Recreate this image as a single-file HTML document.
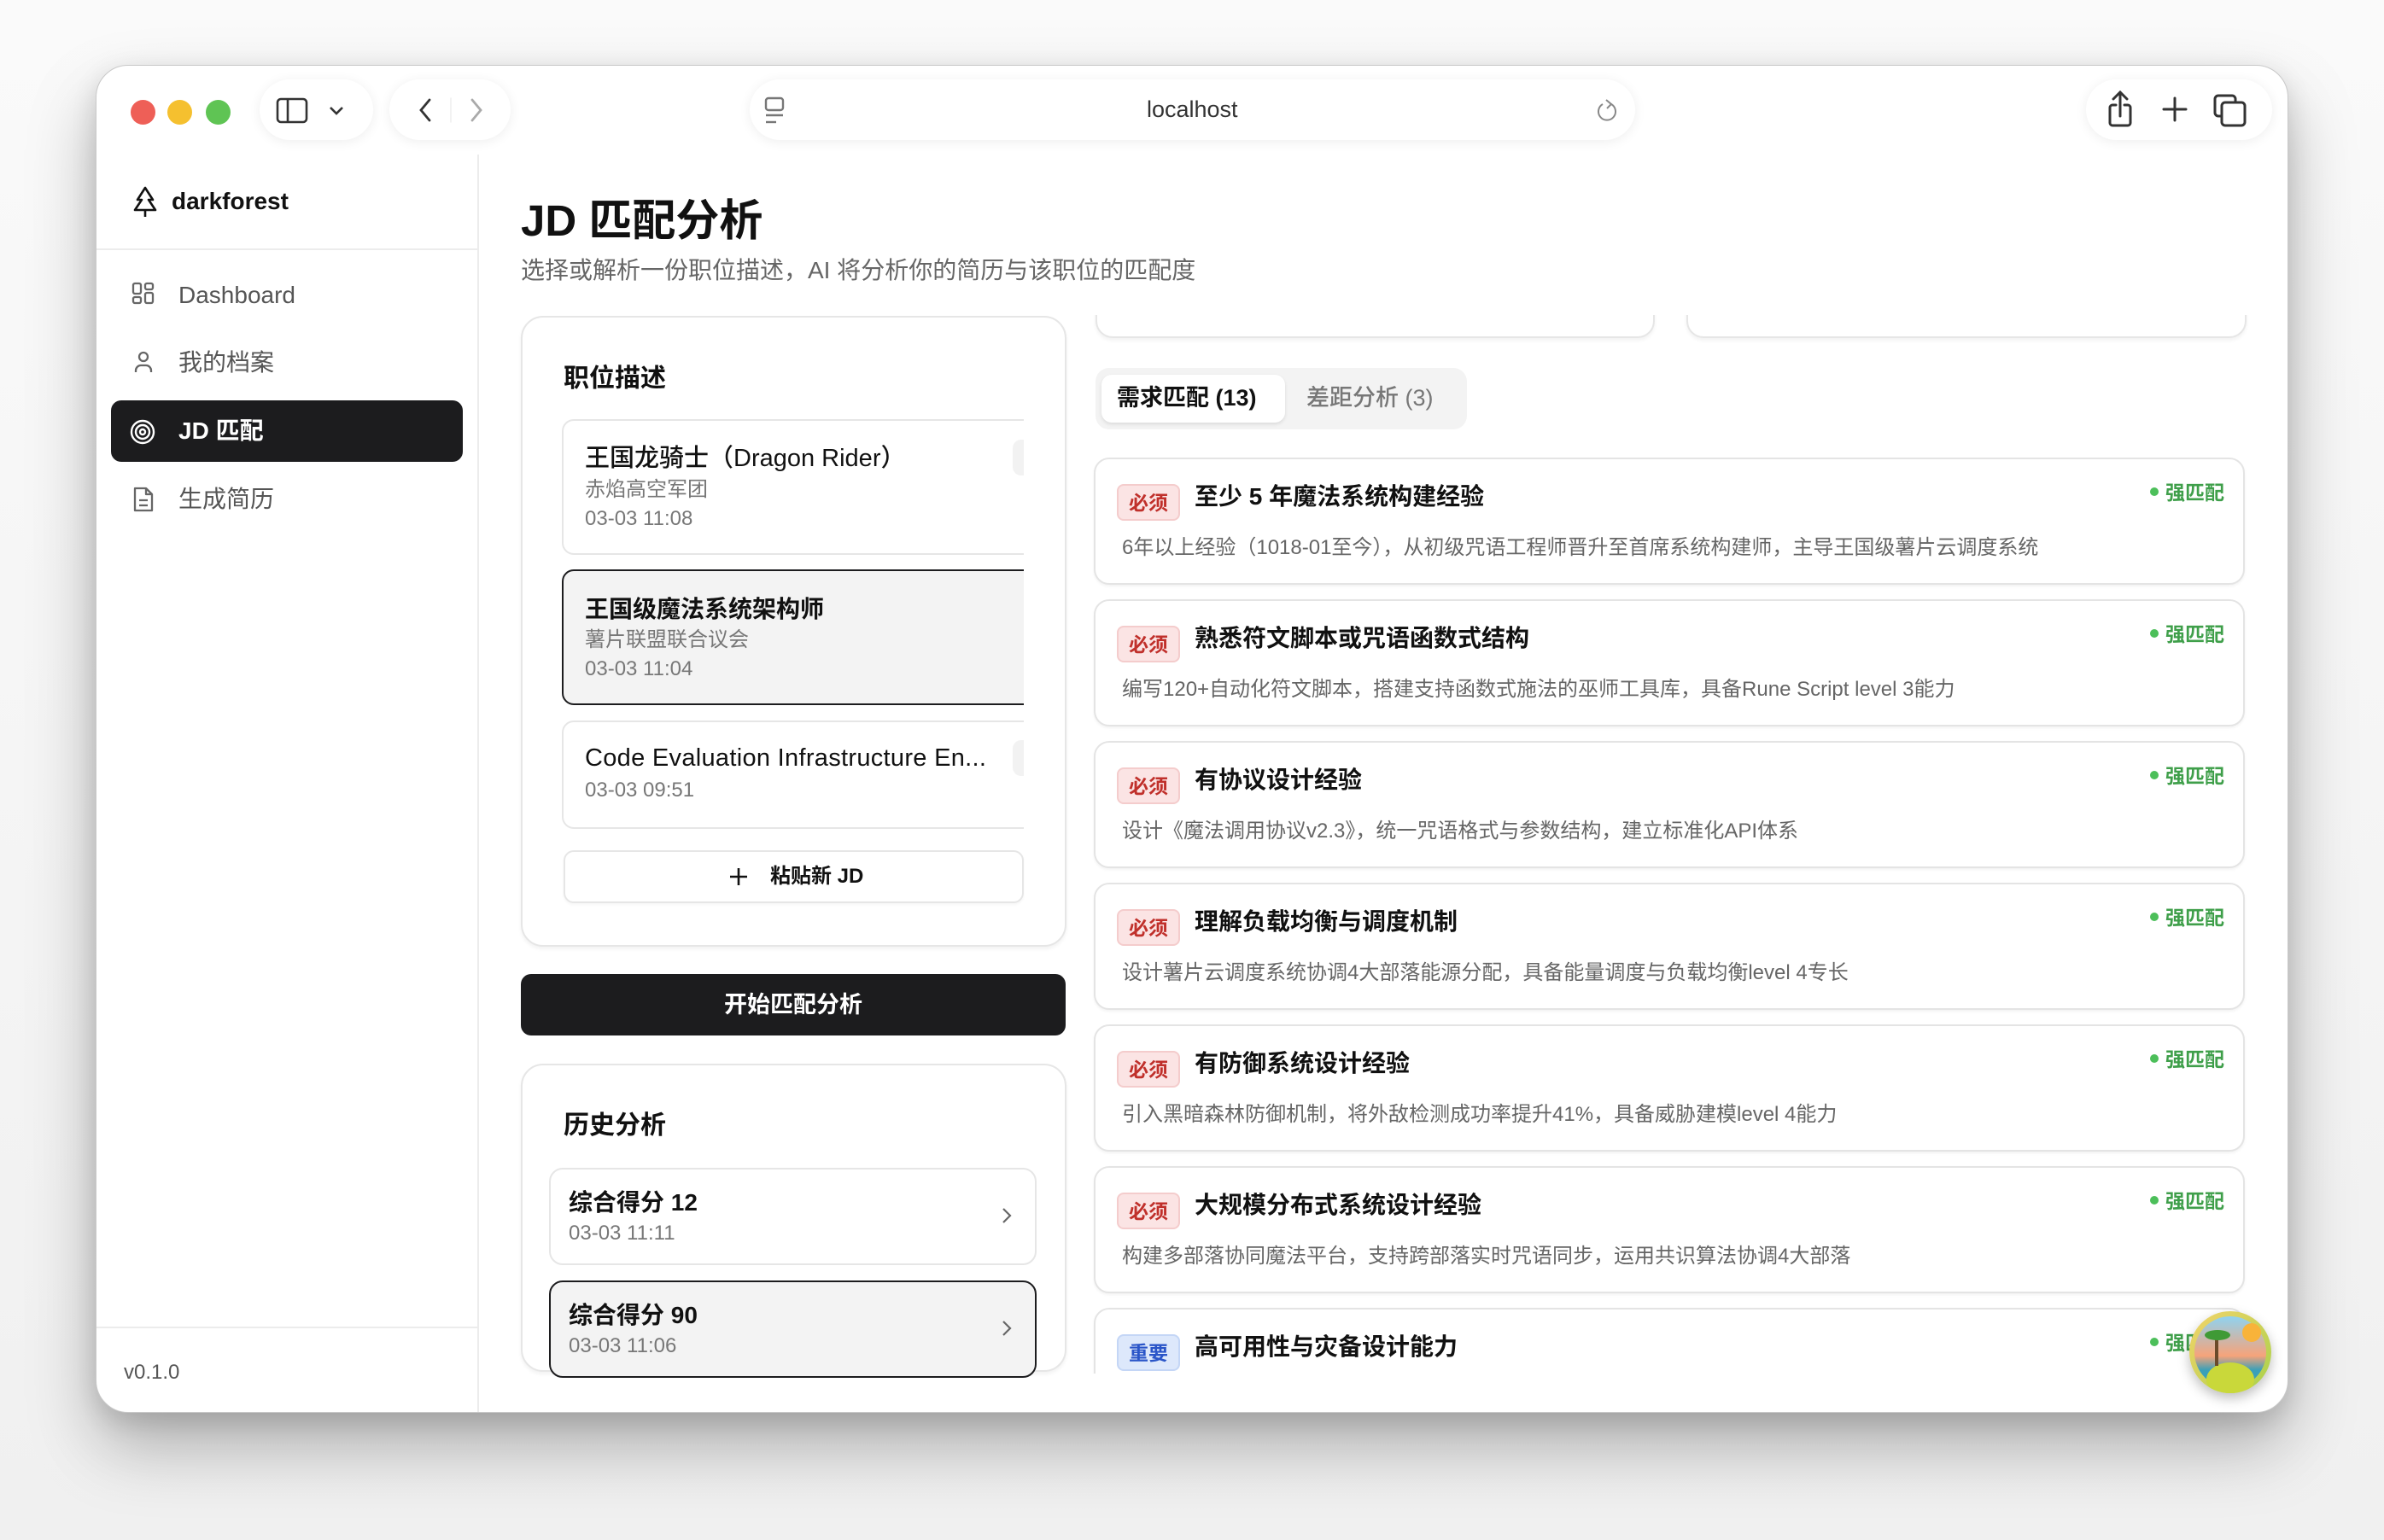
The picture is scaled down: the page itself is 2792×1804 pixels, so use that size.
<!DOCTYPE html>
<html><head><meta charset="utf-8"><style>
*{box-sizing:border-box;margin:0;padding:0}
body{width:2792px;height:1804px;overflow:hidden;background:linear-gradient(#fafafa,#f0f0f0);font-family:"Liberation Sans","Noto Sans CJK SC",sans-serif;position:relative}
.a{position:absolute}
.t{position:absolute;white-space:nowrap;line-height:1}
.win{left:112px;top:76px;width:2568px;height:1579px;background:#fff;border-radius:38px;border:1px solid #c9c9c9;box-shadow:0 40px 80px rgba(0,0,0,.28),0 10px 30px rgba(0,0,0,.12);overflow:hidden}
.pill{background:#fff;border-radius:36px;box-shadow:0 2px 14px rgba(0,0,0,.07)}
.card{background:#fff;border:2px solid #e6e6e6;border-radius:26px;box-shadow:0 3px 4px rgba(0,0,0,.05)}
.req{left:2px;width:1348px;height:149px;background:#fff;border:2px solid #e4e4e4;border-radius:18px;box-shadow:0 2px 3px rgba(0,0,0,.05)}
.bd{left:25px;top:29px;width:74px;height:43px;border-radius:8px;font-size:23px;line-height:41px;text-align:center;font-weight:700}
.must{background:#fbe4e4;border:2px solid #f4cccc;color:#c0302b}
.imp{background:#dde8fb;border:2px solid #c4d6f6;color:#2a55c8}
.rt{left:116px;top:30px;font-size:28px;font-weight:700;color:#111}
.rd{left:31px;top:92px;font-size:24px;color:#666}
.sm{right:22px;top:28px;font-size:23px;font-weight:700;color:#3f9f4a}
.sm:before{content:"";display:inline-block;width:10px;height:10px;border-radius:5px;background:#4cbf5a;margin-right:8px;vertical-align:4px}
</style></head><body>
<div class="a win">
 <div class="a" style="left:40px;top:40px;width:29px;height:29px;border-radius:50%;background:#ee5f57"></div>
 <div class="a" style="left:83px;top:40px;width:29px;height:29px;border-radius:50%;background:#f5c02f"></div>
 <div class="a" style="left:128px;top:40px;width:29px;height:29px;border-radius:50%;background:#5fc454"></div>
 <div class="a pill" style="left:191px;top:16px;width:133px;height:71px"></div>
 <svg class="a" style="left:210px;top:34px" width="90" height="36" viewBox="0 0 90 36" fill="none" stroke="#333" stroke-width="2.6"><rect x="2" y="5" width="34" height="27" rx="4"/><line x1="14" y1="5" x2="14" y2="32"/><path d="M64 15l7 7 7-7"/></svg>
 <div class="a pill" style="left:343px;top:16px;width:142px;height:71px"></div>
 <svg class="a" style="left:360px;top:30px" width="110" height="44" viewBox="0 0 110 44" fill="none" stroke-width="2.8" stroke-linecap="round"><path d="M30 10L20 22l10 12" stroke="#333"/><line x1="55" y1="8" x2="55" y2="36" stroke="#eee" stroke-width="1.5"/><path d="M80 10l10 12-10 12" stroke="#aaa"/></svg>
 <div class="a pill" style="left:765px;top:16px;width:1037px;height:71px"></div>
 <svg class="a" style="left:780px;top:36px" width="30" height="34" viewBox="0 0 30 34" fill="none" stroke="#777" stroke-width="2.4"><rect x="4" y="2" width="20" height="14" rx="3"/><line x1="4" y1="22" x2="24" y2="22"/><line x1="4" y1="30" x2="16" y2="30"/></svg>
 <div class="t" style="left:1230px;top:38px;font-size:27px;color:#333">localhost</div>
 <svg class="a" style="left:1754px;top:36px" width="30" height="34" viewBox="0 0 30 34" fill="none" stroke="#888" stroke-width="2"><path d="M20 9a10 10 0 1 1-10 0"/><path d="M14 4l6 5-5 5"/></svg>
 <div class="a pill" style="left:2330px;top:16px;width:218px;height:71px"></div>
 <svg class="a" style="left:2350px;top:26px" width="190" height="50" viewBox="0 0 190 50" fill="none" stroke="#333" stroke-width="3" stroke-linecap="round"><path d="M15 20h-4a3 3 0 0 0-3 3v18a3 3 0 0 0 3 3h18a3 3 0 0 0 3-3V23a3 3 0 0 0-3-3h-4"/><path d="M20 33V5M12 13l8-8 8 8"/><path d="M84 12v26M71 25h26"/><rect x="131" y="9" width="24" height="24" rx="4"/><rect x="139" y="17" width="27" height="27" rx="4" fill="#fff"/></svg>

 <div class="a" style="left:446px;top:104px;width:2px;height:1475px;background:#ececec"></div>
 <div class="a" style="left:0;top:214px;width:447px;height:2px;background:#ececec"></div>
 <div class="a" style="left:0;top:1477px;width:447px;height:2px;background:#ececec"></div>
 <svg class="a" style="left:40px;top:140px" width="34" height="40" viewBox="0 0 34 40" fill="none" stroke="#111" stroke-width="2.6" stroke-linejoin="round"><path d="M17 3L8 17h5L5 29h24l-8-12h5z"/><line x1="17" y1="29" x2="17" y2="37"/></svg>
 <div class="t" style="left:88px;top:145px;font-size:28px;font-weight:700;color:#111">darkforest</div>
 <svg class="a" style="left:40px;top:252px" width="30" height="30" viewBox="0 0 30 30" fill="none" stroke="#666" stroke-width="2.3"><rect x="3" y="3" width="9" height="12" rx="2"/><rect x="17" y="3" width="9" height="7" rx="2"/><rect x="17" y="14" width="9" height="12" rx="2"/><rect x="3" y="19" width="9" height="7" rx="2"/></svg>
 <div class="t" style="left:96px;top:255px;font-size:28px;color:#555">Dashboard</div>
 <svg class="a" style="left:40px;top:332px" width="30" height="30" viewBox="0 0 30 30" fill="none" stroke="#666" stroke-width="2.3"><circle cx="15" cy="9" r="5"/><path d="M6 27v-2a6 6 0 0 1 6-6h6a6 6 0 0 1 6 6v2"/></svg>
 <div class="t" style="left:96px;top:334px;font-size:28px;color:#555">我的档案</div>
 <div class="a" style="left:17px;top:392px;width:412px;height:72px;background:#1c1c1e;border-radius:12px"></div>
 <svg class="a" style="left:38px;top:413px" width="32" height="32" viewBox="0 0 32 32" fill="none" stroke="#fff" stroke-width="2.4"><circle cx="16" cy="16" r="13"/><circle cx="16" cy="16" r="8"/><circle cx="16" cy="16" r="3"/></svg>
 <div class="t" style="left:96px;top:414px;font-size:28px;font-weight:700;color:#fff">JD 匹配</div>
 <svg class="a" style="left:40px;top:492px" width="30" height="32" viewBox="0 0 30 32" fill="none" stroke="#666" stroke-width="2.3" stroke-linejoin="round"><path d="M5 3h13l7 7v19H5z"/><path d="M18 3v7h7M10 17h10M10 23h10"/></svg>
 <div class="t" style="left:96px;top:494px;font-size:28px;color:#555">生成简历</div>
 <div class="t" style="left:32px;top:1519px;font-size:24px;color:#555">v0.1.0</div>

 <div class="t" style="left:497px;top:156px;font-size:51px;font-weight:700;color:#111">JD 匹配分析</div>
 <div class="t" style="left:497px;top:226px;font-size:28px;color:#666">选择或解析一份职位描述，AI 将分析你的简历与该职位的匹配度</div>

 <div class="a card" style="left:497px;top:293px;width:639px;height:739px"></div>
 <div class="t" style="left:547px;top:352px;font-size:30px;font-weight:700;color:#111">职位描述</div>
 <div class="a" style="left:545px;top:414px;width:541px;height:480px;overflow:hidden">
  <div class="a" style="left:0;top:0;width:600px;height:159px;border:2px solid #e6e6e6;border-radius:14px;background:#fff"></div>
  <div class="a" style="left:528px;top:24px;width:40px;height:42px;border-radius:10px;background:#f2f2f2"></div>
  <div class="t" style="left:27px;top:32px;font-size:29px;font-weight:500;color:#111">王国龙骑士（Dragon Rider）</div>
  <div class="t" style="left:27px;top:71px;font-size:24px;color:#777">赤焰高空军团</div>
  <div class="t" style="left:27px;top:105px;font-size:24px;color:#777">03-03 11:08</div>
  <div class="a" style="left:0;top:176px;width:600px;height:159px;border:2.5px solid #1c1c1e;border-radius:14px;background:#f3f3f3"></div>
  <div class="t" style="left:27px;top:209px;font-size:28px;font-weight:700;color:#111">王国级魔法系统架构师</div>
  <div class="t" style="left:27px;top:247px;font-size:24px;color:#777">薯片联盟联合议会</div>
  <div class="t" style="left:27px;top:281px;font-size:24px;color:#777">03-03 11:04</div>
  <div class="a" style="left:0;top:353px;width:600px;height:127px;border:2px solid #e6e6e6;border-radius:14px;background:#fff"></div>
  <div class="a" style="left:528px;top:376px;width:40px;height:42px;border-radius:10px;background:#f2f2f2"></div>
  <div class="t" style="left:27px;top:383px;font-size:29px;font-weight:500;color:#111;letter-spacing:0.3px">Code Evaluation Infrastructure En...</div>
  <div class="t" style="left:27px;top:423px;font-size:24px;color:#777">03-03 09:51</div>
 </div>
 <div class="a" style="left:547px;top:919px;width:539px;height:62px;border:2px solid #e6e6e6;border-radius:12px;background:#fff;box-shadow:0 2px 3px rgba(0,0,0,.04)"></div>
 <svg class="a" style="left:740px;top:938px" width="24" height="24" viewBox="0 0 24 24" stroke="#111" stroke-width="2.6"><path d="M12 2v20M2 12h20"/></svg>
 <div class="t" style="left:789px;top:938px;font-size:24px;font-weight:700;color:#111">粘贴新 JD</div>

 <div class="a" style="left:497px;top:1064px;width:638px;height:72px;background:#1c1c1e;border-radius:12px"></div>
 <div class="t" style="left:497px;top:1087px;width:638px;text-align:center;font-size:27px;font-weight:700;color:#fff">开始匹配分析</div>

 <div class="a card" style="left:497px;top:1169px;width:639px;height:361px"></div>
 <div class="t" style="left:547px;top:1227px;font-size:30px;font-weight:700;color:#111">历史分析</div>
 <div class="a" style="left:530px;top:1291px;width:571px;height:114px;border:2px solid #e6e6e6;border-radius:16px;background:#fff"></div>
 <div class="t" style="left:553px;top:1318px;font-size:28px;font-weight:700;color:#111">综合得分 12</div>
 <div class="t" style="left:553px;top:1356px;font-size:24px;color:#777">03-03 11:11</div>
 <svg class="a" style="left:1059px;top:1336px" width="14" height="22" viewBox="0 0 14 22" fill="none" stroke="#666" stroke-width="2.2"><path d="M3 3l8 8-8 8"/></svg>
 <div class="a" style="left:530px;top:1423px;width:571px;height:114px;border:2.5px solid #1c1c1e;border-radius:16px;background:#f3f3f3"></div>
 <div class="t" style="left:553px;top:1450px;font-size:28px;font-weight:700;color:#111">综合得分 90</div>
 <div class="t" style="left:553px;top:1488px;font-size:24px;color:#777">03-03 11:06</div>
 <svg class="a" style="left:1059px;top:1468px" width="14" height="22" viewBox="0 0 14 22" fill="none" stroke="#666" stroke-width="2.2"><path d="M3 3l8 8-8 8"/></svg>

 <div class="a" style="left:1166px;top:292px;width:1366px;height:1240px;overflow:hidden">
  <div class="a card" style="left:4px;top:-100px;width:655px;height:127px;border-radius:20px"></div>
  <div class="a card" style="left:696px;top:-100px;width:656px;height:127px;border-radius:20px"></div>
  <div class="a" style="left:4px;top:62px;width:435px;height:72px;background:#f3f3f3;border-radius:16px"></div>
  <div class="a" style="left:11px;top:70px;width:215px;height:56px;background:#fff;border-radius:12px;box-shadow:0 2px 4px rgba(0,0,0,.1)"></div>
  <div class="t" style="left:29px;top:84px;font-size:27px;font-weight:700;color:#111">需求匹配 (13)</div>
  <div class="t" style="left:251px;top:84px;font-size:27px;font-weight:500;color:#777">差距分析 (3)</div>

  <div class="a req" style="top:167px"><div class="t bd must">必须</div><div class="t rt">至少 5 年魔法系统构建经验</div><div class="t sm">强匹配</div><div class="t rd">6年以上经验（1018-01至今），从初级咒语工程师晋升至首席系统构建师，主导王国级薯片云调度系统</div></div>
  <div class="a req" style="top:333px"><div class="t bd must">必须</div><div class="t rt">熟悉符文脚本或咒语函数式结构</div><div class="t sm">强匹配</div><div class="t rd">编写120+自动化符文脚本，搭建支持函数式施法的巫师工具库，具备Rune Script level 3能力</div></div>
  <div class="a req" style="top:499px"><div class="t bd must">必须</div><div class="t rt">有协议设计经验</div><div class="t sm">强匹配</div><div class="t rd">设计《魔法调用协议v2.3》，统一咒语格式与参数结构，建立标准化API体系</div></div>
  <div class="a req" style="top:665px"><div class="t bd must">必须</div><div class="t rt">理解负载均衡与调度机制</div><div class="t sm">强匹配</div><div class="t rd">设计薯片云调度系统协调4大部落能源分配，具备能量调度与负载均衡level 4专长</div></div>
  <div class="a req" style="top:831px"><div class="t bd must">必须</div><div class="t rt">有防御系统设计经验</div><div class="t sm">强匹配</div><div class="t rd">引入黑暗森林防御机制，将外敌检测成功率提升41%，具备威胁建模level 4能力</div></div>
  <div class="a req" style="top:997px"><div class="t bd must">必须</div><div class="t rt">大规模分布式系统设计经验</div><div class="t sm">强匹配</div><div class="t rd">构建多部落协同魔法平台，支持跨部落实时咒语同步，运用共识算法协调4大部落</div></div>
  <div class="a req" style="top:1163px"><div class="t bd imp">重要</div><div class="t rt">高可用性与灾备设计能力</div><div class="t sm">强匹配</div></div>
 </div>

 <div class="a" style="left:2451px;top:1459px;width:96px;height:96px;border-radius:50%;background:linear-gradient(135deg,#f3d36a,#a8d24a);box-shadow:0 6px 14px rgba(0,0,0,.25);overflow:hidden">
  <div class="a" style="left:6px;top:6px;width:84px;height:84px;border-radius:50%;background:linear-gradient(#8fd3f0,#f6a37a 55%,#3aa0b8 75%)"></div>
  <div class="a" style="left:20px;top:60px;width:56px;height:40px;border-radius:50%;background:#c9d83a"></div>
  <div class="a" style="left:30px;top:28px;width:4px;height:36px;background:#6b4a2a"></div>
  <div class="a" style="left:18px;top:22px;width:30px;height:12px;border-radius:50%;background:#3f9a36"></div>
  <div class="a" style="left:62px;top:14px;width:22px;height:22px;border-radius:50%;background:#f8b33a"></div>
 </div>
</div>
</body></html>
